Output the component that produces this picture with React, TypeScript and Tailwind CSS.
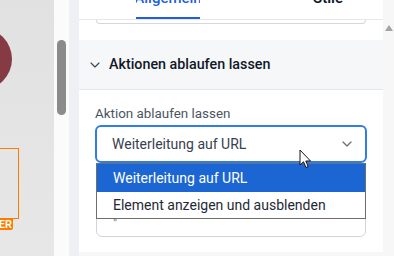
import { ChevronDown } from "lucide-react";

const font = { fontFamily: 'Roboto, "Segoe UI", sans-serif' };

function Cursor() {
  return (
    <svg
      className="absolute left-[299px] top-[149px]"
      width="14"
      height="21"
      viewBox="0 0 14 21"
    >
      <path
        d="M1 1 L1 16 L4.5 12.8 L7 18.5 L9.2 17.5 L6.8 12 L11.5 12 Z"
        fill="#fff"
        stroke="#111"
        strokeWidth="1"
        strokeLinejoin="miter"
      />
    </svg>
  );
}

function Canvas() {
  return (
    <div className="relative w-[54px] shrink-0 overflow-hidden bg-gradient-to-b from-[#e1e1e1] to-[#e7e7e7]">
      <div className="absolute -left-[50px] top-[28px] h-[62px] w-[62px] rounded-full bg-[#853a44]" />
      <div className="absolute -left-[10px] top-[148px] h-[71px] w-[29px] border border-[#ff7a00]" />
      <div className="absolute left-0 top-[218px] flex h-[12px] w-[13px] items-center justify-end rounded-br-[2px] bg-[#ff7a00] pr-[1px] text-[11px] font-semibold leading-none text-white">
        ER
      </div>
    </div>
  );
}

export default function App() {
  return (
    <div
      className="relative flex h-[256px] w-[394px] overflow-hidden bg-white text-[#1f2937]"
      style={font}
    >
      <Canvas />
      <div className="w-[15px] shrink-0 bg-[#fbfbfb] px-[3px] pt-[40px]">
        <div className="h-[75px] w-[9px] rounded-full bg-[#8b8b8b]" />
      </div>
      <div className="w-[10px] shrink-0 bg-[#eef0f3]" />

      <div className="flex w-[304px] shrink-0 flex-col bg-white">
        {/* tabs */}
        <div className="relative flex h-[20px] border-b border-[#e5e7eb]">
          <div className="ml-[57px] flex h-full w-[64px] justify-center overflow-hidden border-b-2 border-[#1d5fe0]">
            <span className="-mt-[12px] text-[15px] font-medium leading-[20px] text-[#1d5fe0]">
              Allgemein
            </span>
          </div>
          <div className="ml-[113px] flex h-full overflow-hidden">
            <span className="-mt-[12px] text-[15px] font-semibold leading-[20px] text-[#111827]">
              Stile
            </span>
          </div>
        </div>
        <div className="mx-[17px] h-[4px] rounded-b-[6px] border border-t-0 border-[#d4d6da]" />

        <div className="mt-[16px] flex h-[50px] items-center border-b border-[#e5e7eb] bg-[#f6f7f9] pl-[8px]">
          <ChevronDown className="h-[16px] w-[16px] text-[#374151]" strokeWidth={1.6} />
          <span className="ml-[6px] text-[14.3px] font-medium text-[#111827]">
            Aktionen ablaufen lassen
          </span>
        </div>

        <div className="px-[16px] pt-[16px]">
          <div className="text-[13.4px] leading-[16px] text-[#4b5563]">
            Aktion ablaufen lassen
          </div>
          <div className="relative mt-[3px]">
            <div className="flex h-[38px] items-center justify-between rounded-[6px] border-2 border-[#2f7de9] pl-[15px] pr-[10px]">
              <span className="text-[14px] text-[#374151]">Weiterleitung auf URL</span>
              <ChevronDown className="h-[16px] w-[16px] text-[#6b7280]" strokeWidth={2} />
            </div>
            <div className="mx-[1px] mt-[9px] h-[65px] rounded-[6px] border border-[#d1d5db] px-[16px] pt-[43px] text-[13px] leading-[16px] text-[#6b7280]">
              "
            </div>
            <div className="absolute left-[1px] right-[1px] top-[38px] border border-[#6e6e6e] bg-white">
              <div className="flex h-[28px] items-center bg-[#1c66d3] pl-[16px] text-[14px] text-white">
                Weiterleitung auf URL
              </div>
              <div className="flex h-[26px] items-center pl-[16px] text-[14px] text-[#1f2937]">
                Element anzeigen und ausblenden
              </div>
            </div>
          </div>
        </div>
        <div className="mt-auto h-[4px] bg-[#f6f7f9]" />
      </div>

      <div className="flex flex-1 flex-col items-center bg-[#f7f7f7] pt-[25px]">
        <div className="h-0 w-0 border-x-[4px] border-b-[6px] border-x-transparent border-b-[#a3a3a3]" />
      </div>
      <Cursor />
    </div>
  );
}
